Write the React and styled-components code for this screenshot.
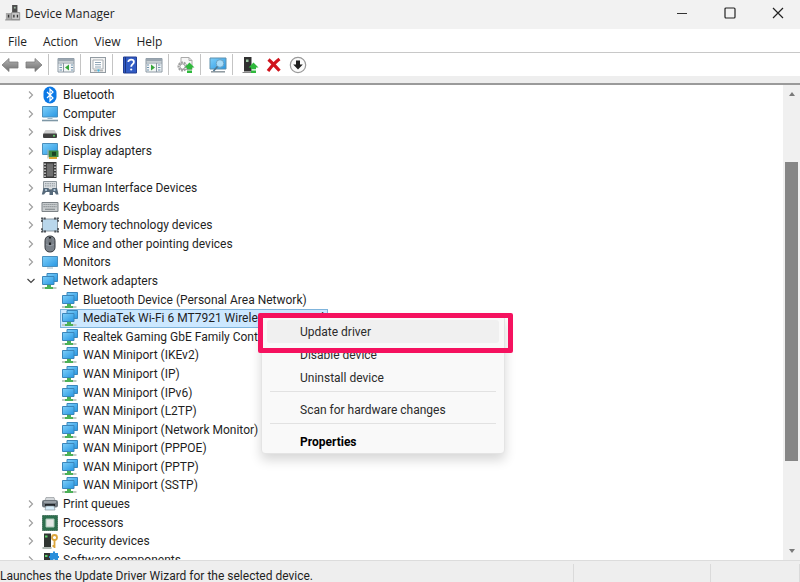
import React from 'react'
import styled, { createGlobalStyle, css } from 'styled-components'

const GlobalStyle = createGlobalStyle`
    * {
        box-sizing: border-box;
    }

    body {
        margin: 0;
        font-family: Roboto, 'Open Sans', 'Liberation Sans', sans-serif;
        font-size: 12px;
        color: #1f1f1f;
    }

    button {
        font: inherit;
        color: inherit;
        border: 0;
        padding: 0;
        background: none;
    }
`;

const Window = styled.div`
    position: relative;
    display: flex;
    flex-direction: column;
    height: 100vh;
    overflow: hidden;
    background-color: #ffffff;
`;

const TitleBar = styled.header`
    display: flex;
    align-items: center;
    flex-shrink: 0;
    height: 29px;
    padding: 0 0 3px 5px;
    background-color: #f2f2f2;
`;

const Title = styled.h1`
    flex: 1;
    margin: 0 0 0 4px;
    font-family: 'Open Sans', 'Noto Sans', sans-serif;
    font-size: 12px;
    font-weight: 400;
`;

const CaptionButton = styled.button`
    display: flex;
    align-items: center;
    justify-content: center;
    width: 48px;
    height: 26px;
`;

const CaptionButtons = styled.div`
    display: flex;
    margin-right: -2px;
`;

const MenuBar = styled.nav`
    display: flex;
    align-items: center;
    flex-shrink: 0;
    gap: 16px;
    height: 24px;
    padding: 1px 8px 0;
    font-family: 'Open Sans', 'Noto Sans', sans-serif;
    border-bottom: 1px solid #c8c8c8;
`;

const ToolBar = styled.div`
    display: flex;
    align-items: center;
    flex-shrink: 0;
    gap: 4px;
    height: 23px;
`;

const ToolButton = styled.button`
    display: flex;
    align-items: center;
    justify-content: center;
    width: 20px;
    height: 20px;
`;

const ToolDivider = styled.div`
    width: 1px;
    height: 21px;
    margin-right: 3px;
    background-color: #c4c4c4;
`;

const ToolEdge = styled.div`
    flex-shrink: 0;
    height: 9px;
    background-color: #eeeeee;
    border-bottom: 2px solid #9a9a9a;
`;

const Content = styled.main`
    display: flex;
    flex: 1;
    min-height: 0;
`;

const TreePane = styled.div`
    flex: 1;
    min-width: 0;
    overflow: hidden;
`;

const Tree = styled.ul`
    display: grid;
    grid-auto-rows: 1fr;
    justify-items: start;
    height: calc(100% + 9px);
    margin: 0;
    padding: 1px 0 0 24px;
    list-style: none;
`;

const TreeRow = styled.li`
    display: flex;
    align-items: center;
    gap: 4px;
    padding: 0 4px 0 1px;
    line-height: 16px;
    white-space: nowrap;
    margin-left: ${({ $child }) => ($child ? '36px' : '0')};

    ${({ $selected }) => $selected && css`
        background-color: #cce8ff;
        box-shadow: inset 0 0 0 1px #7fb4dc;
    `}
`;

const Expander = styled.button`
    display: flex;
    width: 12px;
    height: 12px;
`;

const ScrollBar = styled.div`
    display: flex;
    flex-direction: column;
    align-items: center;
    width: 17px;
    padding: 3px 0;
    background-color: #f0f0f0;
`;

const ScrollButton = styled.button`
    display: flex;
    align-items: center;
    justify-content: center;
    width: 12px;
    height: 12px;
`;

const ScrollTrack = styled.div`
    display: flex;
    flex-direction: column;
    flex: 1;
    width: 13px;
`;

const ScrollSpace = styled.div`
    flex: ${({ $size }) => $size};
`;

const ScrollThumb = styled.div`
    flex: 300;
    background-color: #868686;
`;

const StatusBar = styled.footer`
    display: flex;
    flex-shrink: 0;
    height: 22px;
    padding-top: 3px;
    background-color: #eeeeee;
    border-top: 1px solid #dcdcdc;
`;

const StatusCell = styled.div`
    flex: ${({ $size }) => $size};
    min-width: 0;
    line-height: 24px;
    white-space: nowrap;
    border-right: 1px solid #dadada;
`;

const ContextMenu = styled.div`
    position: absolute;
    top: 315px;
    left: 261px;
    width: 244px;
    padding: 4px 5px 0;
    background-color: #f9f9f9;
    border: 1px solid #e4e4e4;
    border-radius: 4px;
    box-shadow: 0 6px 12px rgba(0, 0, 0, 0.16);
`;

const MenuItem = styled.button`
    display: block;
    width: 100%;
    height: 23px;
    padding-left: 33px;
    text-align: left;
    border-radius: 3px;
    font-weight: ${({ $bold }) => ($bold ? 700 : 400)};
    color: ${({ $bold }) => ($bold ? '#000000' : '#2b2b2b')};
    background-color: ${({ $active }) => ($active ? '#f0f0f0' : 'transparent')};
`;

const MenuSeparator = styled.hr`
    margin: 2px 3px 6px;
    border: 0;
    border-top: 1px solid #e2e2e2;
`;

const Highlight = styled.div`
    position: absolute;
    top: -3px;
    left: -4px;
    right: -9px;
    height: 40px;
    border: 5px solid #f5125f;
    border-radius: 2px;
    pointer-events: none;
`;

const Icon = ({ size = 18, children }) => (
    <svg width={size} height={size} viewBox="0 0 18 18" fill="none" aria-hidden="true">
        {children}
    </svg>
)

const Defs = () => (
    <svg width="0" height="0" style={{ position: 'absolute' }} aria-hidden="true">
        <defs>
            <linearGradient id="screen" x1="0" y1="0" x2="1" y2="1">
                <stop offset="0" stopColor="#7fd0fa" />
                <stop offset="1" stopColor="#2796e2" />
            </linearGradient>
            <linearGradient id="steel" x1="0" y1="0" x2="0" y2="1">
                <stop offset="0" stopColor="#b4b4b4" />
                <stop offset="1" stopColor="#6e6e6e" />
            </linearGradient>
        </defs>
    </svg>
)

const GreenUp = () => (
    <path d="M12.500 6.500l5 5h-2.500v1.800h-5v-1.800H7.500zM10 14.500h5v2.500h-5z" fill="#2fb83c" />
)

const icons = {
    app: (
        <>
            <path d="M8 0h6v9H8z" fill="#4c4c4c" />
            <path d="M10 2h2v2h-2z" fill="#9fb7a4" />
            <path d="M1 9h7v8H1z" fill="#a9a9a9" />
            <path d="M7.500 8.500h9v8h-9z" fill="#c9c9c9" stroke="#8b8b8b" />
            <path d="M4 11v3M10 11v3M14 11v3" stroke="#333333" strokeWidth="1.500" />
            <path d="M0 16.800h17" stroke="#8b8b8b" />
        </>
    ),
    bluetooth: (
        <>
            <rect x="2.500" y=".5" width="13" height="17" rx="6.500" fill="#0a78e6" />
            <path d="M6 6l6 6-3 2.800V3.200L12 6l-6 6" stroke="#ffffff" strokeWidth="1.200" />
        </>
    ),
    computer: (
        <>
            <path d="M1.500 1.500h15v10.500h-15z" fill="url(#screen)" stroke="#4a8fbd" />
            <path d="M6.500 13.500h5" stroke="#9ab6c8" />
            <path d="M1 15.500h16" stroke="#7e97a6" strokeWidth="1.600" />
        </>
    ),
    disk: (
        <>
            <path d="M4.500 7h9l2.500 4H2z" fill="#cfcfcf" />
            <rect x="2" y="10.500" width="14" height="4.500" rx="1" fill="#404040" />
            <circle cx="13" cy="12.800" r="1" fill="#64d66a" />
        </>
    ),
    display: (
        <>
            <path d="M1.500 1.500h15v11h-15z" fill="url(#screen)" stroke="#4a8fbd" />
            <path d="M7.500 8.500h10v6.500h-10z" fill="#3d8a42" />
            <rect x="11" y="9.800" width="4" height="4" fill="#1c4423" />
            <path d="M8 16h8" stroke="#d6a833" strokeWidth="2" />
            <path d="M7 7.500v9" stroke="#a7b1a2" />
        </>
    ),
    firmware: (
        <>
            <path d="M2.500 1h13v16h-13z" fill="#393939" />
            <path d="M5.800 2.500h6.400v13H5.800z" fill="#6f6f6f" />
            <path d="M4 2.500v14M14 2.500v14" stroke="#e8e8e8" strokeWidth="1.400" strokeDasharray="1.500 1.500" />
        </>
    ),
    hid: (
        <>
            <path d="M2.500 2.500h13v8h-13z" fill="#d8dcdf" stroke="#8e979d" />
            <path d="M4 4.700h10M4 6.900h10" stroke="#8e979d" strokeDasharray="1.500 .8" />
            <path d="M2.500 9h5l1 2h2l1-2h4.500l1.500 6.500h-2.500l-1.500-2.500h-1.500v3H8.500v-3H5l-2 2.500H.8z" fill="#56697a" />
            <circle cx="5" cy="11" r="1.100" fill="#bcd3e4" />
            <circle cx="13.500" cy="11" r="1.100" fill="#bcd3e4" />
        </>
    ),
    keyboard: (
        <>
            <path d="M1 4.500h16v9H1z" fill="#c8ccce" stroke="#7d8387" />
            <path d="M2.500 6.500h13M2.500 8.700h13" stroke="#8b9195" strokeWidth="1.200" strokeDasharray="1.300 .7" />
            <path d="M4 11.300h10" stroke="#8b9195" strokeWidth="1.200" />
        </>
    ),
    memory: (
        <>
            <rect x="1.500" y="3" width="15" height="12" fill="#b9d7ec" stroke="#8c9aa4" />
            <path d="M1 6V2.500h4M13 2.500h4V6M17 12v3.500h-4M5 15.500H1V12" stroke="#4e545a" strokeWidth="1.800" strokeDasharray="2 .6" />
        </>
    ),
    mouse: (
        <>
            <rect x="4" y="1" width="10" height="16" rx="4.500" fill="#7b828a" stroke="#33373c" />
            <path d="M9 2v8" stroke="#202327" strokeWidth="2.200" />
            <path d="M9 3.500v4" stroke="#c4cbd2" />
            <path d="M5 9.500q4 2.500 8 0" stroke="#a4abb3" strokeWidth=".7" />
        </>
    ),
    monitor: (
        <>
            <path d="M1.500 3.500h15v10h-15z" fill="url(#screen)" stroke="#4a8fbd" />
            <path d="M6 15h6" stroke="#9ab6c8" />
        </>
    ),
    network: (
        <>
            <path d="M6 1.500h10.500v8H6z" fill="url(#screen)" stroke="#3b86bb" />
            <path d="M1.500 4.500h11.500v8H1.500z" fill="url(#screen)" stroke="#3b86bb" />
            <path d="M8 13v3" stroke="#4cb157" strokeWidth="4" />
            <path d="M1 16h14.500" stroke="#c1cbc3" strokeWidth="2" />
            <path d="M4 16h8" stroke="#4cb157" strokeWidth="2" />
        </>
    ),
    printer: (
        <>
            <path d="M5 2.500h8l1 3H4z" fill="#d3d7da" stroke="#868c91" strokeWidth=".6" />
            <rect x="1" y="5" width="16" height="7.500" rx="2" fill="#6e767d" />
            <path d="M3 7h12" stroke="#c3c9ce" />
            <path d="M4 9h10v2H4z" fill="#23272b" />
            <path d="M5 11h8l1 4H4z" fill="#d7edfa" stroke="#7b868e" strokeWidth=".6" />
        </>
    ),
    processor: (
        <>
            <path d="M1.500 1.500h15v15h-15z" fill="#2e6f4e" stroke="#24583e" strokeDasharray="1.200 .8" />
            <path d="M5 5h8v8H5z" fill="#e4e7e5" stroke="#a9c9b6" />
        </>
    ),
    security: (
        <>
            <path d="M3 1.500h7V15H3z" fill="#303532" />
            <path d="M4 3.500h2.500v2H4z" fill="#5dd06a" />
            <path d="M1.500 16h9" stroke="#96a09a" strokeWidth="1.500" />
            <circle cx="13.500" cy="5.500" r="2.500" stroke="#dba53b" strokeWidth="1.800" />
            <path d="M13.500 8v8M13.500 14h-2" stroke="#dba53b" strokeWidth="1.800" />
        </>
    ),
    software: (
        <>
            <path d="M3 2h7v14H3z" fill="#303532" />
            <path d="M4 4h2.500v2H4z" fill="#5dd06a" />
            <path d="M9 2h3V.5h2V2h3v3h1v2h-1v3h-3V8.500h-2V10H9V7H8V5h1z" fill="#2a8fdb" />
        </>
    ),
    back: <path d="M1 9l7-6.500v3.500h9v6H8v3.500z" fill="url(#steel)" stroke="#7b7b7b" strokeWidth=".8" />,
    forward: <path d="M17 9l-7-6.500v3.500H1v6h9v3.500z" fill="url(#steel)" stroke="#7b7b7b" strokeWidth=".8" />,
    treeView: (
        <>
            <path d="M1 2.500h16v13.500H1z" fill="#f3f5f6" stroke="#8b98a3" />
            <path d="M1 4h16" stroke="#9aa6b0" strokeWidth="3" />
            <path d="M1 7h16M6.500 7v9" stroke="#8b98a3" />
            <path d="M2.500 9h2.500M2.500 11.500h2.500M2.500 14h2.500M14 9h2M14 11.500h2M14 14h2" stroke="#6f94b0" />
            <path d="M12 8.500v6L8 11.500z" fill="#35a63a" />
        </>
    ),
    properties: (
        <>
            <rect x="1.500" y="1.500" width="15" height="15" fill="#f1f1f1" stroke="#929ba2" />
            <path d="M4 4h10v9H4z" fill="#ffffff" stroke="#a9b0b5" />
            <path d="M6 6.500h6M6 8.700h6M6 11h6" stroke="#8da3b4" />
            <path d="M5 14.800h3M11 14.800h3" stroke="#9b9b9b" />
            <circle cx="9.500" cy="14.500" r="1.200" fill="#4ab5dc" />
        </>
    ),
    help: (
        <>
            <path d="M2.500 1h13v16h-13z" fill="#315bc4" stroke="#233f93" />
            <path d="M4.500 1v16" stroke="#1c367f" />
            <path d="M7.300 6c0-3.200 5.600-3 5.600 0 0 2.200-2.700 2.100-2.700 4.800" stroke="#ffffff" strokeWidth="1.800" />
            <circle cx="10.200" cy="13.500" r="1.100" fill="#ffffff" />
        </>
    ),
    actionPane: (
        <>
            <path d="M1 2.500h16v13.500H1z" fill="#f3f5f6" stroke="#8b98a3" />
            <path d="M1 4h16" stroke="#9aa6b0" strokeWidth="3" />
            <path d="M1 7h16M11.500 7v9" stroke="#8b98a3" />
            <path d="M13 9h2.500M13 11.500h2.500M13 14h2.500M2 9h2M2 11.500h2M2 14h2" stroke="#6f94b0" />
            <path d="M6 8.500v6l4-3z" fill="#35a63a" />
        </>
    ),
    scan: (
        <>
            <path d="M4 1.500h8l3 3v9H4z" fill="#f6f6f6" stroke="#aaaaaa" />
            <path d="M12 1.500v3h3" stroke="#aaaaaa" />
            <circle cx="5.500" cy="10.500" r="4" stroke="#a0a0a0" strokeWidth="2" strokeDasharray="2 .8" />
            <circle cx="5.500" cy="10.500" r="2.600" stroke="#9a9a9a" fill="#ffffff" />
            <GreenUp />
        </>
    ),
    remoteScreen: (
        <>
            <path d="M1 2h16v11H1z" fill="url(#screen)" stroke="#5f90ad" />
            <path d="M2 15.800h14" stroke="#8d979d" strokeWidth="1.500" />
            <circle cx="11" cy="7.500" r="3.800" fill="#a9dcf8" stroke="#6ba2c2" />
            <path d="M8.500 10.500L4.500 15" stroke="#4d7590" strokeWidth="1.600" />
        </>
    ),
    updateDriver: (
        <>
            <path d="M3 1h7.500v14.500H3z" fill="#303030" />
            <path d="M5 3.500h2.500v2.500H5z" fill="#9cc7a2" />
            <path d="M1.500 16.500h9" stroke="#888888" />
            <GreenUp />
        </>
    ),
    uninstall: <path d="M3.500 3.500Q8 7.500 14.500 14.800M14.500 3Q9 7 3 15" stroke="#d0141d" strokeWidth="3.200" />,
    disable: (
        <>
            <circle cx="9" cy="9" r="7.700" fill="#fbfbfb" stroke="#9a9a9a" strokeWidth="1.200" />
            <path d="M7 4.500h4v4h2.800L9 13.500 4.200 8.500H7z" fill="#1f1f1f" />
        </>
    ),
}

const toolGroups = [
    [['back', 'Back'], ['forward', 'Forward']],
    [['treeView', 'Show/Hide Console Tree']],
    [['properties', 'Properties']],
    [['help', 'Help'], ['actionPane', 'Show/Hide Action Pane']],
    [['scan', 'Scan for hardware changes']],
    [['remoteScreen', 'Add drivers']],
    [['updateDriver', 'Update driver'], ['uninstall', 'Uninstall device'], ['disable', 'Disable device']],
]

const devices = [
    { icon: 'bluetooth', name: 'Bluetooth' },
    { icon: 'computer', name: 'Computer' },
    { icon: 'disk', name: 'Disk drives' },
    { icon: 'display', name: 'Display adapters' },
    { icon: 'firmware', name: 'Firmware' },
    { icon: 'hid', name: 'Human Interface Devices' },
    { icon: 'keyboard', name: 'Keyboards' },
    { icon: 'memory', name: 'Memory technology devices' },
    { icon: 'mouse', name: 'Mice and other pointing devices' },
    { icon: 'monitor', name: 'Monitors' },
    { icon: 'network', name: 'Network adapters', open: true },
    { icon: 'network', name: 'Bluetooth Device (Personal Area Network)', child: true },
    { icon: 'network', name: 'MediaTek Wi-Fi 6 MT7921 Wireless LAN Card', child: true, selected: true },
    { icon: 'network', name: 'Realtek Gaming GbE Family Controller', child: true },
    { icon: 'network', name: 'WAN Miniport (IKEv2)', child: true },
    { icon: 'network', name: 'WAN Miniport (IP)', child: true },
    { icon: 'network', name: 'WAN Miniport (IPv6)', child: true },
    { icon: 'network', name: 'WAN Miniport (L2TP)', child: true },
    { icon: 'network', name: 'WAN Miniport (Network Monitor)', child: true },
    { icon: 'network', name: 'WAN Miniport (PPPOE)', child: true },
    { icon: 'network', name: 'WAN Miniport (PPTP)', child: true },
    { icon: 'network', name: 'WAN Miniport (SSTP)', child: true },
    { icon: 'printer', name: 'Print queues' },
    { icon: 'processor', name: 'Processors' },
    { icon: 'security', name: 'Security devices' },
    { icon: 'software', name: 'Software components' },
]

const Chevron = ({ open }) => (
    <svg width="12" height="12" viewBox="0 0 12 12" fill="none" aria-hidden="true">
        <path
            d={open ? 'M2.500 4l3.500 3.500L9.500 4' : 'M4 2.500l3.500 3.500L4 9.500'}
            stroke={open ? '#444444' : '#a0a0a0'}
            strokeWidth="1.200"
        />
    </svg>
)

const DeviceTree = () => (
    <Tree role="tree" aria-label="Devices">
        {devices.map(({ icon, name, open, child, selected }) => (
            <TreeRow
                key={name}
                role="treeitem"
                aria-level={child ? 2 : 1}
                aria-selected={!!selected}
                $child={child}
                $selected={selected}
            >
                {!child && (
                    <Expander aria-label={`Expand ${name}`} aria-expanded={!!open}>
                        <Chevron open={open} />
                    </Expander>
                )}
                <Icon>{icons[icon]}</Icon>
                <span>{name}</span>
            </TreeRow>
        ))}
    </Tree>
)

export default function App() {

  return (
    <Window>
        <GlobalStyle />
        <Defs />
        <TitleBar>
            <Icon size={16}>{icons.app}</Icon>
            <Title>Device Manager</Title>
            <CaptionButtons>
                <CaptionButton aria-label="Minimize">
                    <svg width="12" height="12" stroke="#333333"><path d="M1 6.500h10" /></svg>
                </CaptionButton>
                <CaptionButton aria-label="Maximize">
                    <svg width="12" height="12" fill="none" stroke="#222222" strokeWidth="1.200">
                        <rect x="1" y="1" width="10" height="10" rx="1" />
                    </svg>
                </CaptionButton>
                <CaptionButton aria-label="Close">
                    <svg width="12" height="12" stroke="#222222" strokeWidth="1.200"><path d="M1 1l10 10M11 1L1 11" /></svg>
                </CaptionButton>
            </CaptionButtons>
        </TitleBar>
        <MenuBar>
            <button>File</button>
            <button>Action</button>
            <button>View</button>
            <button>Help</button>
        </MenuBar>
        <ToolBar role="toolbar">
            {toolGroups.map((group, i) => (
                <React.Fragment key={i}>
                    {i > 0 && <ToolDivider />}
                    {group.map(([icon, label]) => (
                        <ToolButton key={icon} aria-label={label}>
                            <Icon>{icons[icon]}</Icon>
                        </ToolButton>
                    ))}
                </React.Fragment>
            ))}
        </ToolBar>
        <ToolEdge />
        <Content>
            <TreePane>
                <DeviceTree />
            </TreePane>
            <ScrollBar>
                <ScrollButton aria-label="Scroll up">
                    <svg width="8" height="8"><path d="M1 6h6L4 2z" fill="#7a7a7a" /></svg>
                </ScrollButton>
                <ScrollTrack>
                    <ScrollSpace $size={62} />
                    <ScrollThumb />
                    <ScrollSpace $size={84} />
                </ScrollTrack>
                <ScrollButton aria-label="Scroll down">
                    <svg width="8" height="8"><path d="M1 2h6L4 6z" fill="#7a7a7a" /></svg>
                </ScrollButton>
            </ScrollBar>
        </Content>
        <StatusBar>
            <StatusCell $size={575}>Launches the Update Driver Wizard for the selected device.</StatusCell>
            <StatusCell $size={137} />
            <StatusCell $size={88} />
        </StatusBar>
        <ContextMenu role="menu">
            <MenuItem role="menuitem" $active>Update driver</MenuItem>
            <MenuItem role="menuitem">Disable device</MenuItem>
            <MenuItem role="menuitem">Uninstall device</MenuItem>
            <MenuSeparator />
            <MenuItem role="menuitem">Scan for hardware changes</MenuItem>
            <MenuSeparator />
            <MenuItem role="menuitem" $bold>Properties</MenuItem>
            <Highlight />
        </ContextMenu>
    </Window>
  )
}
